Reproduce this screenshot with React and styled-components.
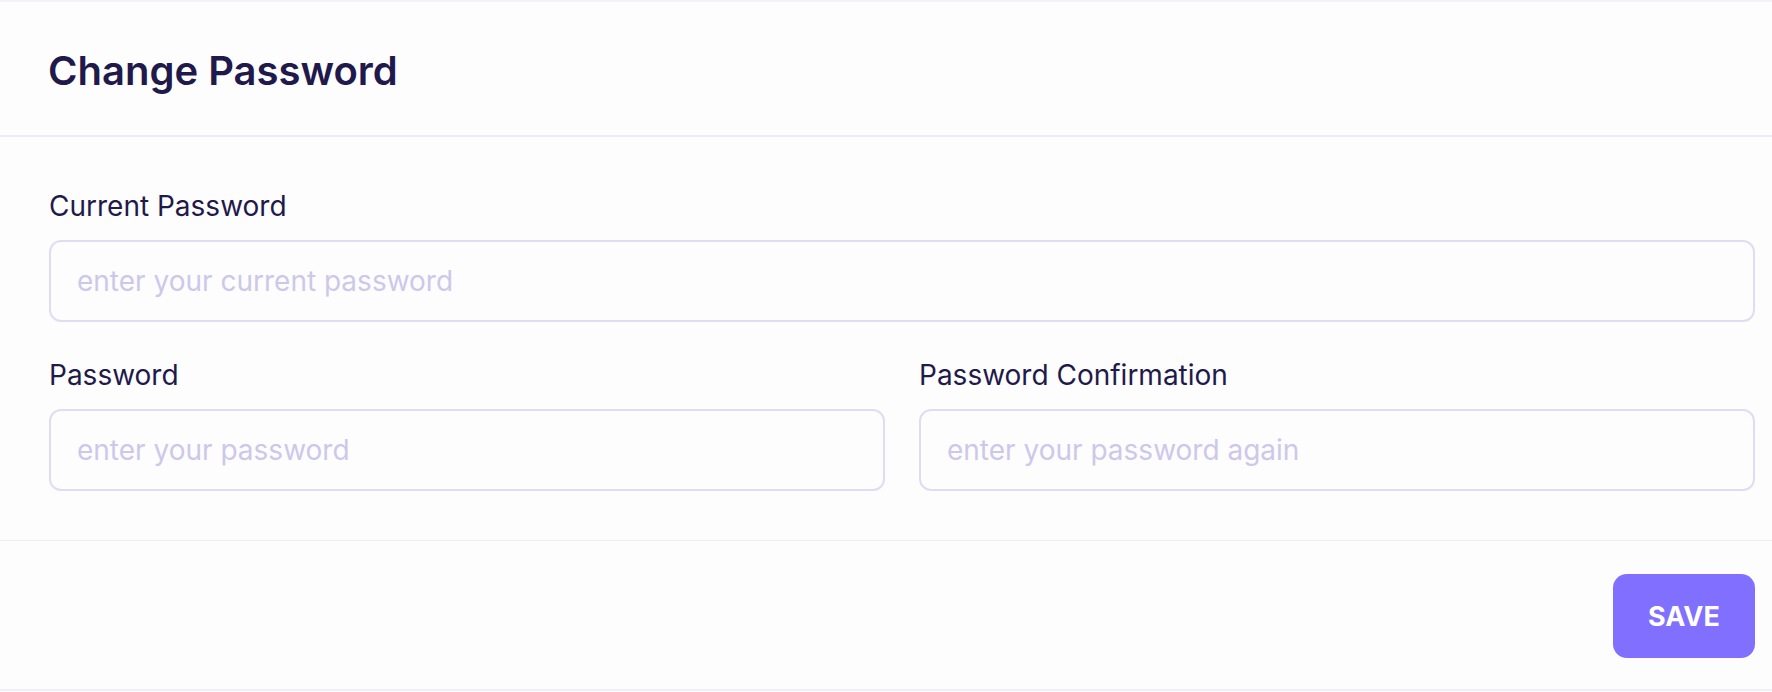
import React, { useState } from 'react';
import styled, { createGlobalStyle } from 'styled-components';

const GlobalStyle = createGlobalStyle`
  html, body {
    margin: 0;
    padding: 0;
    background: #fdfdfe;
  }
  body {
    font-family: Inter, "Noto Sans", sans-serif;
  }
  * {
    box-sizing: border-box;
  }
`;

const Card = styled.div`
  width: 100%;
  background: #fdfdfe;
  border-top: 2px solid #f3f2f8;
  border-bottom: 2px solid #f1f0f6;
`;

const CardHeader = styled.div`
  height: 135px;
  display: flex;
  align-items: center;
  padding: 4px 17px 0 48px;
  border-bottom: 2px solid #ecebfa;
`;

const Title = styled.h2`
  margin: 0;
  font-size: 40px;
  font-weight: 590;
  color: #1f1a4b;
`;

const CardBody = styled.div`
  padding: 49px 17px 49px 49px;
  display: flex;
  flex-direction: column;
  gap: 33px;
  border-bottom: 1px solid #eeedf4;
`;

const Row = styled.div`
  display: grid;
  grid-template-columns: ${props => (props.cols === 2 ? '1fr 1fr' : '1fr')};
  column-gap: 34px;
`;

const Field = styled.div`
  display: flex;
  flex-direction: column;
  gap: 14px;
`;

const Label = styled.label`
  font-size: 28px;
  line-height: 40px;
  font-weight: 440;
  color: #1f1a4b;
`;

const Input = styled.input`
  width: 100%;
  height: 82px;
  padding: 0 26px;
  border: 2px solid #e0ddf2;
  border-radius: 12px;
  background: #fdfdfe;
  font-family: Inter, "Noto Sans", sans-serif;
  font-size: 28px;
  color: #1f1a4b;
  outline: none;

  &::placeholder {
    color: #cdc8ea;
  }
`;

const CardFooter = styled.div`
  display: flex;
  justify-content: flex-end;
  padding: 33px 17px 31px 49px;
`;

const SaveButton = styled.button`
  width: 142px;
  height: 84px;
  border: none;
  border-radius: 14px;
  background: #8170ff;
  color: #ffffff;
  font-family: Inter, "Noto Sans", sans-serif;
  font-size: 27px;
  font-weight: 700;
  cursor: pointer;
`;

const App = () => {
  const [current, setCurrent] = useState('');
  const [password, setPassword] = useState('');
  const [confirm, setConfirm] = useState('');

  return (
    <>
      <GlobalStyle />
      <Card>
        <CardHeader>
          <Title>Change Password</Title>
        </CardHeader>
        <CardBody>
          <Row>
            <Field>
              <Label htmlFor="current">Current Password</Label>
              <Input
                type="password"
                id="current"
                placeholder="enter your current password"
                value={current}
                onChange={e => setCurrent(e.target.value)} />
            </Field>
          </Row>
          <Row cols={2}>
            <Field>
              <Label htmlFor="password">Password</Label>
              <Input
                type="password"
                id="password"
                placeholder="enter your password"
                value={password}
                onChange={e => setPassword(e.target.value)} />
            </Field>
            <Field>
              <Label htmlFor="confirm">Password Confirmation</Label>
              <Input
                type="password"
                id="confirm"
                placeholder="enter your password again"
                value={confirm}
                onChange={e => setConfirm(e.target.value)} />
            </Field>
          </Row>
        </CardBody>
        <CardFooter>
          <SaveButton>SAVE</SaveButton>
        </CardFooter>
      </Card>
    </>
  );
};

export default App;
